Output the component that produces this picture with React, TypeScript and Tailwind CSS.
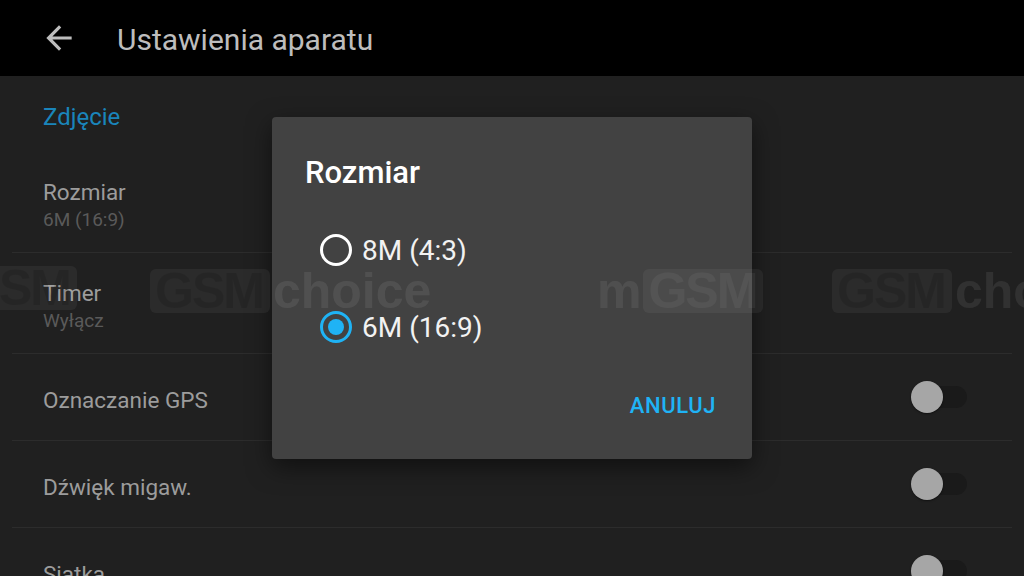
import { useState } from "react"

function BackArrow() {
  return (
    <svg width="38" height="38" viewBox="0 0 24 24" className="fill-[#bdbdbd]">
      <path d="M20 11H7.83l5.59-5.59L12 4l-8 8 8 8 1.41-1.41L7.83 13H20v-2z" />
    </svg>
  )
}

function Toggle() {
  return (
    <div className="relative w-[72px] h-8 flex items-center">
      <div className="absolute left-[16px] w-[40px] h-[22px] rounded-full bg-[#1a1a1a]" />
      <div className="absolute left-0 w-8 h-8 rounded-full bg-[#a6a6a6] shadow-[0_1px_2px_rgba(0,0,0,0.5)]" />
    </div>
  )
}

function Radio({ checked }: { checked: boolean }) {
  return (
    <div
      className={`w-[32px] h-[32px] rounded-full border-[3px] flex items-center justify-center ${
        checked ? "border-[#1fb3f5]" : "border-white"
      }`}
    >
      {checked && <div className="w-4 h-4 rounded-full bg-[#1fb3f5]" />}
    </div>
  )
}

function Mark({ pre, post, left, onDialog }: { pre?: string; post?: string; left: number; onDialog?: boolean }) {
  return (
    <div
      className="absolute top-[266px] flex items-center text-[50px] font-bold leading-none pointer-events-none"
      style={{ left, fontFamily: '"Liberation Sans", Arial, sans-serif' }}
    >
      {pre && <span className="text-white/[0.07] mr-[2px]">{pre}</span>}
      <span
        className={`rounded-[6px] pl-[5px] pr-[7px] h-[44px] flex items-center tracking-[-2px] bg-white/[0.05] ${
          onDialog ? "text-white/[0.05]" : "text-black/[0.12]"
        }`}
      >
        GSM
      </span>
      {post && <span className="text-white/[0.08] ml-[3px]">{post}</span>}
    </div>
  )
}

export default function App() {
  const [selected, setSelected] = useState(1)
  const options = ["8M (4:3)", "6M (16:9)"]

  return (
    <div
      className="relative w-[1024px] h-[576px] overflow-hidden bg-[#202020]"
      style={{ fontFamily: 'Roboto, "Noto Sans", sans-serif' }}
    >
      {/* Toolbar */}
      <div className="h-[76px] bg-black flex items-center pl-[40px]">
        <BackArrow />
        <span className="ml-[39px] mt-[3px] text-[30px] text-[#bdbdbd]">Ustawienia aparatu</span>
      </div>

      {/* Settings list */}
      <div className="mx-3">
        <div className="h-[76px] flex items-center pl-[31px] pt-[6px] text-[24px] text-[#1a85bb]">Zdjęcie</div>

        <div className="h-[101px] flex flex-col justify-center pl-[31px] pt-[5px] border-b border-[#2c2c2c]">
          <span className="text-[22.5px] text-[#9c9c9c] leading-[30px]">Rozmiar</span>
          <span className="text-[19px] text-[#5a5a5a] leading-[26px]">6M (16:9)</span>
        </div>

        <div className="h-[101px] flex flex-col justify-center pl-[31px] pt-[5px] border-b border-[#2c2c2c]">
          <span className="text-[22.5px] text-[#9c9c9c] leading-[30px]">Timer</span>
          <span className="text-[19px] text-[#5a5a5a] leading-[26px]">Wyłącz</span>
        </div>

        {["Oznaczanie GPS", "Dźwięk migaw.", "Siatka"].map((label) => (
          <div
            key={label}
            className="h-[87px] flex items-center justify-between pl-[31px] pr-[29px] border-b border-[#2c2c2c]"
          >
            <span className="text-[22.5px] text-[#9c9c9c] mt-[8px]">{label}</span>
            <Toggle />
          </div>
        ))}
      </div>

      {/* Dialog */}
      <div className="absolute left-[272px] top-[117px] w-[480px] h-[342px] rounded-[4px] bg-[#424242] shadow-[0_8px_24px_rgba(0,0,0,0.5)] flex flex-col">
        <div className="pl-[33px] pt-[37px] text-[31px] font-medium text-white leading-[38px]">Rozmiar</div>
        <div className="mt-[41px] flex flex-col gap-[43px] pl-[48px]">
          {options.map((opt, i) => (
            <button
              key={opt}
              onClick={() => setSelected(i)}
              className="flex items-center gap-[10px] h-[34px] text-left"
            >
              <Radio checked={selected === i} />
              <span className="text-[28px] text-[#f2f2f2] mt-[2px]">{opt}</span>
            </button>
          ))}
        </div>
        <div className="mt-auto mb-[37px] flex justify-end pr-[36px]">
          <span className="text-[22px] font-medium text-[#1fb3f5] tracking-[0.6px]">ANULUJ</span>
        </div>
      </div>

      {/* Watermarks */}
      <Mark left={-43} />
      <Mark left={150} post="choice" />
      <Mark left={597} pre="m" onDialog />
      <Mark left={832} post="cho" />
    </div>
  )
}
